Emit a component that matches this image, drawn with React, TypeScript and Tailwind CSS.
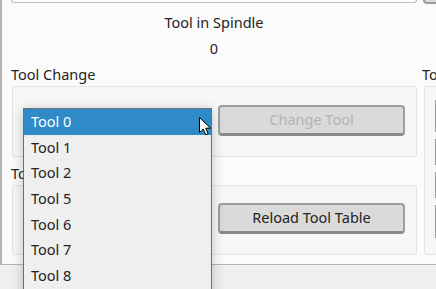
export default function App() {
  const items = ["Tool 0", "Tool 1", "Tool 2", "Tool 5", "Tool 6", "Tool 7", "Tool 8", "Tool 9"];
  return (
    <div className="relative w-[436px] h-[289px] overflow-hidden bg-[#efefef] text-[14.5px] text-[#232323] font-['Noto_Sans',sans-serif]">
      <div className="flex h-[265px] border-l-2 border-b border-[#b4b4b4] bg-[#fbfbfb]">
        <div className="flex w-[415px] shrink-0 flex-col pl-[9px]">
          <div className="h-[3px] w-[406px] rounded-b-[4px] border border-t-0 border-[#bcbcbc] bg-white" />
          <div className="mt-[9px] h-[21px] text-center leading-[21px]">Tool in Spindle</div>
          <div className="mt-[5px] h-[20px] text-center leading-[20px]">0</div>
          <div className="mt-[6px] h-[20px] leading-[20px]">Tool Change</div>
          <div className="ml-[1px] mt-[2px] flex h-[71px] w-[405px] items-start justify-end rounded-[2px] border border-[#e3e3e3] bg-[#f7f7f7] pr-[11px] pt-[18px]">
            <div className="flex h-[31px] w-[187px] items-center justify-center rounded-[4px] border-2 border-b-[3px] border-[#9d9d9d] border-b-[#8a8a8a] bg-[#dadada] text-[#b3b3b3]">
              Change Tool
            </div>
          </div>
          <div className="mt-[6px] h-[20px] leading-[20px]">Tool Table</div>
          <div className="ml-[1px] mt-[2px] flex h-[70px] w-[405px] items-start justify-end rounded-[2px] border border-[#e3e3e3] bg-[#f7f7f7] pr-[11px] pt-[17px]">
            <div className="flex h-[31px] w-[187px] items-center justify-center rounded-[4px] border-2 border-b-[3px] border-[#9d9d9d] border-b-[#8a8a8a] bg-[#dadada] text-[#232323]">
              Reload Tool Table
            </div>
          </div>
        </div>
        <div className="ml-[5px] flex min-w-0 flex-1 flex-col overflow-hidden">
          <div className="ml-[1px] h-[4px] w-[40px] rounded-b-[4px] border-2 border-t-0 border-[#9d9d9d] bg-[#dadada]" />
          <div className="mt-[60px] h-[20px] whitespace-nowrap leading-[20px]">Tool Offsets</div>
          <div className="ml-[2px] mt-[2px] flex h-[169px] w-[40px] flex-col gap-[7px] rounded-[2px] border border-[#e3e3e3] bg-[#f7f7f7] pl-[10px] pt-[13px]">
            <div className="h-[32px] w-[20px] border-l-2 border-[#9d9d9d]" />
            <div className="h-[26px] w-[20px] border-l-2 border-[#9d9d9d]" />
            <div className="h-[26px] w-[20px] border-l-2 border-[#9d9d9d]" />
            <div className="h-[33px] w-[20px] border-l-2 border-[#9d9d9d]" />
          </div>
        </div>
      </div>

      <div className="absolute left-[23px] top-[108px] w-[189px] border border-[#6f6f6f] bg-[#efefef] shadow-[0_2px_12px_rgba(0,0,0,0.22)]">
        {items.map((t, i) => (
          <div
            key={t}
            className={
              i === 0
                ? "h-[25.7px] bg-[#2f8ac8] pl-[7px] leading-[25.7px] text-white"
                : "h-[25.7px] pl-[7px] leading-[25.7px] text-[#232323]"
            }
          >
            {t}
          </div>
        ))}
      </div>

      <svg className="absolute left-[199px] top-[117px]" width="13" height="19" viewBox="0 0 13 19">
        <path d="M0.5 0.5 L0.5 15.5 L4.2 12 L6.8 17.8 L9.2 16.8 L6.7 11.2 L11.5 11.2 Z" fill="#ffffff" stroke="#000000" strokeWidth="1" strokeLinejoin="round" />
      </svg>
    </div>
  );
}
